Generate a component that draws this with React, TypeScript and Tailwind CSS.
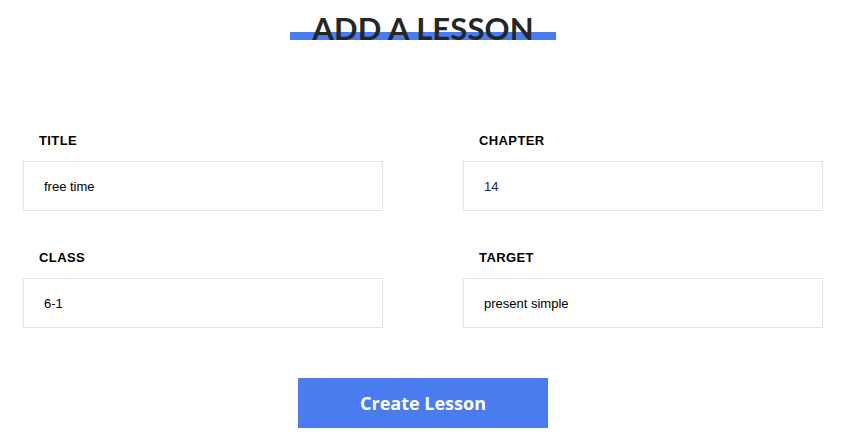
import React from "react";

const Field = ({ label, value, valueClass }: { label: string; value: string; valueClass?: string }) => (
  <div className="flex flex-col">
    <label className="pl-4 text-[13px] leading-4 font-bold tracking-[0.4px] text-black font-['Liberation_Sans',Arial,sans-serif]">
      {label}
    </label>
    <input
      readOnly
      value={value}
      className={`mt-3 h-[50px] w-full border border-[#e5e5e5] bg-white px-5 text-[13px] outline-none font-['Liberation_Sans',Arial,sans-serif] ${valueClass ?? "text-black"}`}
    />
  </div>
);

export default function App() {
  return (
    <div className="min-h-[447px] w-full bg-white">
      <div className="ml-[23px] w-[800px] flex flex-col items-center">
        <div className="relative mt-[11px] px-[22px]">
          <span className="absolute left-0 right-0 top-[21px] h-[8px] bg-[#4a7cf0]" />
          <h1 className="relative text-[31px] leading-[34px] font-bold tracking-[0.1px] text-[#262626] font-['Lato',sans-serif]">
            ADD A LESSON
          </h1>
        </div>
        <div className="mt-[88px] grid w-full grid-cols-2 gap-x-[80px] gap-y-[39px]">
          <Field label="TITLE" value="free time" />
          <Field label="CHAPTER" value="14" valueClass="text-[#1c1a5c]" />
          <Field label="CLASS" value="6-1" />
          <Field label="TARGET" value="present simple" />
        </div>
        <button className="mt-[50px] h-[50px] w-[250px] bg-[#4a7cf0] text-[18px] font-bold text-white font-['Open_Sans',sans-serif]">
          Create Lesson
        </button>
      </div>
    </div>
  );
}
